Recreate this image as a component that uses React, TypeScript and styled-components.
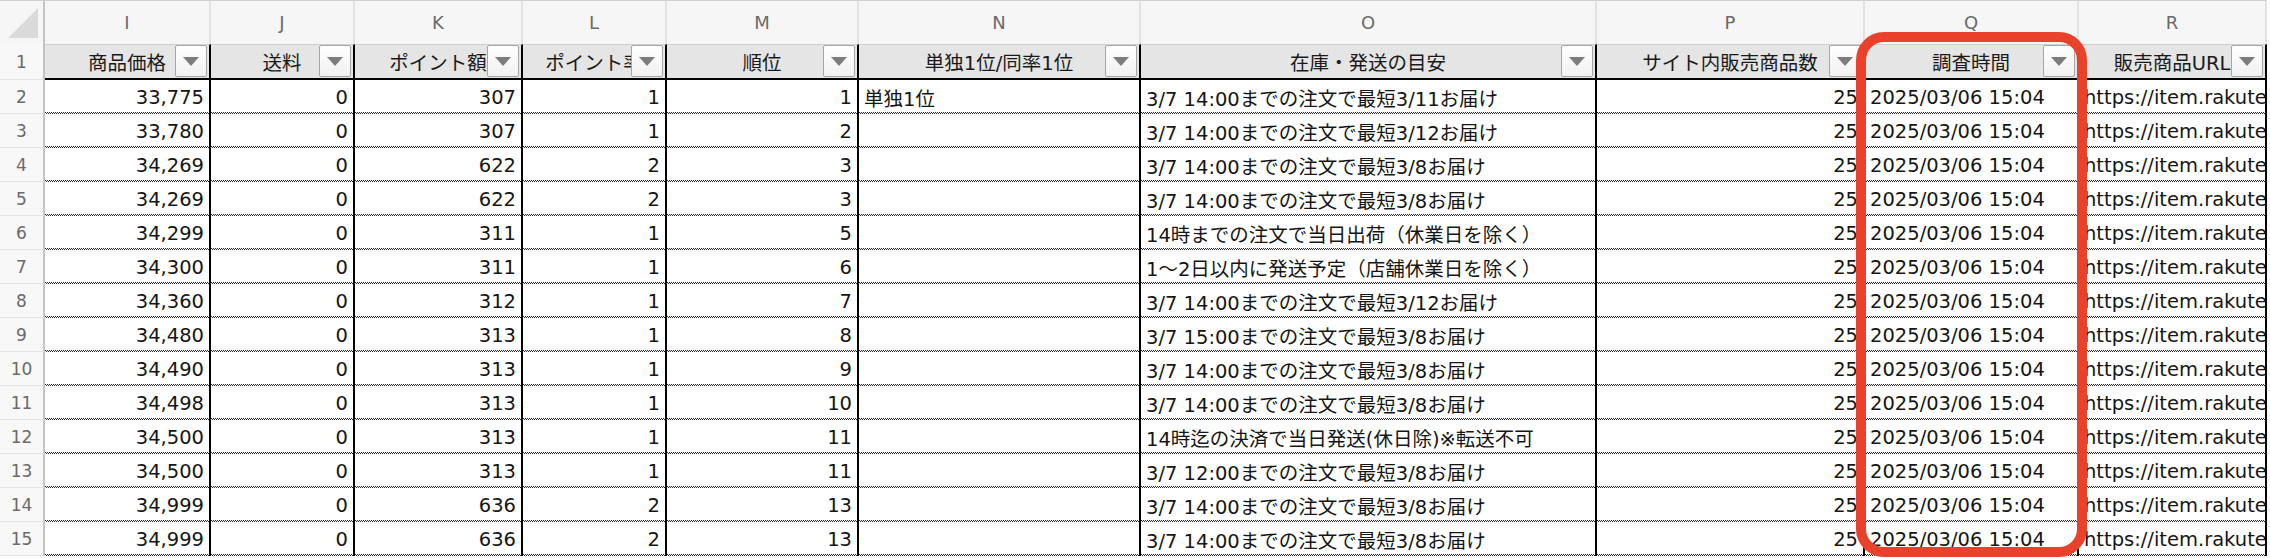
import React from 'react';
import styled, { createGlobalStyle } from 'styled-components';

const GlobalStyle = createGlobalStyle`
  html, body {
    margin: 0;
    padding: 0;
    background: #ffffff;
  }
  body {
    font-family: 'DejaVu Sans', 'Noto Sans CJK JP', sans-serif;
  }
`;

interface Column {
  letter: string;
  title: string;
  width: number;
  align: 'left' | 'right';
}

const columns: Column[] = [
  { letter: 'I', title: '商品価格', width: 166, align: 'right' },
  { letter: 'J', title: '送料', width: 144, align: 'right' },
  { letter: 'K', title: 'ポイント額', width: 168, align: 'right' },
  { letter: 'L', title: 'ポイント率', width: 144, align: 'right' },
  { letter: 'M', title: '順位', width: 192, align: 'right' },
  { letter: 'N', title: '単独1位/同率1位', width: 282, align: 'left' },
  { letter: 'O', title: '在庫・発送の目安', width: 456, align: 'left' },
  { letter: 'P', title: 'サイト内販売商品数', width: 268, align: 'right' },
  { letter: 'Q', title: '調査時間', width: 214, align: 'left' },
  { letter: 'R', title: '販売商品URL', width: 188, align: 'left' },
];

const ship = (d: string) => `3/7 14:00までの注文で最短${d}お届け`;
const when = '2025/03/06 15:04';
const url = 'https://item.rakuten.co.jp/';

const rows: string[][] = [
  ['33,775', '0', '307', '1', '1', '単独1位', ship('3/11'), '25', when, url],
  ['33,780', '0', '307', '1', '2', '', ship('3/12'), '25', when, url],
  ['34,269', '0', '622', '2', '3', '', ship('3/8'), '25', when, url],
  ['34,269', '0', '622', '2', '3', '', ship('3/8'), '25', when, url],
  ['34,299', '0', '311', '1', '5', '', '14時までの注文で当日出荷（休業日を除く）', '25', when, url],
  ['34,300', '0', '311', '1', '6', '', '1〜2日以内に発送予定（店舗休業日を除く）', '25', when, url],
  ['34,360', '0', '312', '1', '7', '', ship('3/12'), '25', when, url],
  ['34,480', '0', '313', '1', '8', '', '3/7 15:00までの注文で最短3/8お届け', '25', when, url],
  ['34,490', '0', '313', '1', '9', '', ship('3/8'), '25', when, url],
  ['34,498', '0', '313', '1', '10', '', ship('3/8'), '25', when, url],
  ['34,500', '0', '313', '1', '11', '', '14時迄の決済で当日発送(休日除)※転送不可', '25', when, url],
  ['34,500', '0', '313', '1', '11', '', '3/7 12:00までの注文で最短3/8お届け', '25', when, url],
  ['34,999', '0', '636', '2', '13', '', ship('3/8'), '25', when, url],
  ['34,999', '0', '636', '2', '13', '', ship('3/8'), '25', when, url],
];

const App = (): JSX.Element => {
  const template = `45px ${columns.map((c) => `${c.width}px`).join(' ')}`;

  return (
    <>
      <GlobalStyle />
      <Sheet style={{ gridTemplateColumns: template }}>
        <Corner>
          <CornerMark />
        </Corner>
        {columns.map((c) => (
          <ColLetter key={c.letter}>{c.letter}</ColLetter>
        ))}

        <RowNum>1</RowNum>
        {columns.map((c) => (
          <HeaderCell key={c.title}>
            <HeaderLabel>{c.title}</HeaderLabel>
            <FilterButton>
              <FilterArrow />
            </FilterButton>
          </HeaderCell>
        ))}

        {rows.map((r, i) => (
          <React.Fragment key={i}>
            <RowNum>{i + 2}</RowNum>
            {r.map((v, j) => (
              <DataCell key={j} $align={columns[j].align}>
                {v}
              </DataCell>
            ))}
          </React.Fragment>
        ))}

        <Highlight />
      </Sheet>
    </>
  );
};

export default App;

const Sheet = styled.div`
  position: relative;
  display: grid;
  grid-template-rows: 44px 36px repeat(14, 34px);
  width: 2270px;
  height: 558px;
  overflow: hidden;
  background: #ffffff;
`;

const Corner = styled.div`
  display: flex;
  align-items: flex-end;
  justify-content: flex-end;
  padding: 0 5px 6px 0;
  box-sizing: border-box;
  background: #f6f6f6;
  border-top: 1px solid #d0d0d0;
  border-right: 2px solid #c4c4c4;
`;

const CornerMark = styled.div`
  width: 0;
  height: 0;
  border-left: 30px solid transparent;
  border-bottom: 30px solid #dadada;
`;

const ColLetter = styled.div`
  display: flex;
  align-items: center;
  justify-content: center;
  box-sizing: border-box;
  background: #f6f6f6;
  border-top: 1px solid #d0d0d0;
  border-right: 2px solid #e2e2e2;
  color: #6a6a6a;
  font-size: 18px;
`;

const RowNum = styled.div`
  display: flex;
  align-items: center;
  justify-content: center;
  box-sizing: border-box;
  background: #f8f8f8;
  border-right: 2px solid #c4c4c4;
  border-bottom: 1px solid #e2e2e2;
  color: #6a6a6a;
  font-size: 17px;
`;

const HeaderCell = styled.div`
  display: grid;
  box-sizing: border-box;
  background: #e5e5e5;
  border-top: 1px solid #d0d0d0;
  border-right: 2px solid #000000;
  border-bottom: 2px solid #000000;
  overflow: hidden;
  min-width: 0;
`;

const HeaderLabel = styled.div`
  grid-area: 1 / 1;
  align-self: center;
  justify-self: center;
  white-space: nowrap;
  font-size: 19.5px;
  color: #1a1a1a;
`;

const FilterButton = styled.div`
  grid-area: 1 / 1;
  justify-self: end;
  align-self: start;
  display: flex;
  align-items: center;
  justify-content: center;
  width: 32px;
  height: 32px;
  margin-right: 2px;
  box-sizing: border-box;
  border: 1px solid #a6a6a6;
  border-radius: 2px;
  background: linear-gradient(#ffffff, #f1f1f1);
`;

const FilterArrow = styled.div`
  width: 0;
  height: 0;
  border-left: 8px solid transparent;
  border-right: 8px solid transparent;
  border-top: 9px solid #7c7c7c;
`;

const DataCell = styled.div<{ $align: 'left' | 'right' }>`
  display: flex;
  align-items: center;
  justify-content: ${(p) => (p.$align === 'right' ? 'flex-end' : 'flex-start')};
  padding: 0 5px 0 5px;
  box-sizing: border-box;
  border-right: 2px solid #000000;
  overflow: hidden;
  white-space: nowrap;
  min-width: 0;
  font-size: 19.5px;
  color: #151515;
  background-image: linear-gradient(90deg, #222 1px, transparent 1px), linear-gradient(90deg, transparent 1px, #222 1px);
  background-size: 2px 1px, 2px 1px;
  background-position: 0 calc(100% - 1px), 0 100%;
  background-repeat: repeat-x;
`;

const Highlight = styled.div`
  position: absolute;
  left: 1856px;
  top: 32px;
  width: 231px;
  height: 525px;
  box-sizing: border-box;
  border: 10px solid #e8412c;
  border-radius: 28px;
  pointer-events: none;
`;
